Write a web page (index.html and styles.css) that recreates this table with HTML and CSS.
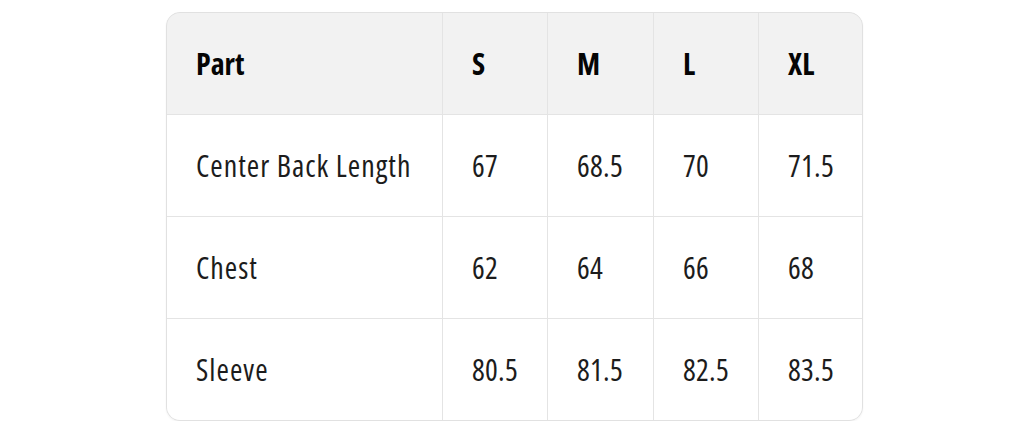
FILE: index.html
```html
<!DOCTYPE html>
<html>
<head>
<meta charset="utf-8">
<link rel="stylesheet" href="styles.css">
</head>
<body>
<div class="table">
  <div class="cell head">Part</div>
  <div class="cell head">S</div>
  <div class="cell head">M</div>
  <div class="cell head">L</div>
  <div class="cell head">XL</div>

  <div class="cell label">Center Back Length</div>
  <div class="cell">67</div>
  <div class="cell">68.5</div>
  <div class="cell">70</div>
  <div class="cell">71.5</div>

  <div class="cell label">Chest</div>
  <div class="cell">62</div>
  <div class="cell">64</div>
  <div class="cell">66</div>
  <div class="cell">68</div>

  <div class="cell label">Sleeve</div>
  <div class="cell">80.5</div>
  <div class="cell">81.5</div>
  <div class="cell">82.5</div>
  <div class="cell">83.5</div>
</div>
</body>
</html>
```
FILE: styles.css
```css
html, body {
  margin: 0;
  padding: 0;
  background: #ffffff;
}
body {
  padding: 12px 0 0 166px;
  font-family: "Open Sans", "Liberation Sans", sans-serif;
  font-stretch: 75%;
}
.table {
  width: 695px;
  display: grid;
  grid-template-columns: 275px 104px 105px 104px 103px;
  grid-auto-rows: 101px;
  gap: 1px;
  background: #e4e4e4;
  border: 1px solid #e1e1e1;
  border-radius: 14px;
  overflow: hidden;
  box-shadow: 0 1px 2px rgba(0,0,0,0.05);
}
.cell {
  background: #ffffff;
  display: flex;
  align-items: center;
  padding-left: 29px;
  font-size: 30px;
  color: #1c1c1c;
  white-space: nowrap;
  letter-spacing: 0.3px;
}
.label {
  letter-spacing: 1px;
}
.head {
  background: #f2f2f2;
  font-weight: 700;
  color: #050505;
  letter-spacing: 0;
}
```
